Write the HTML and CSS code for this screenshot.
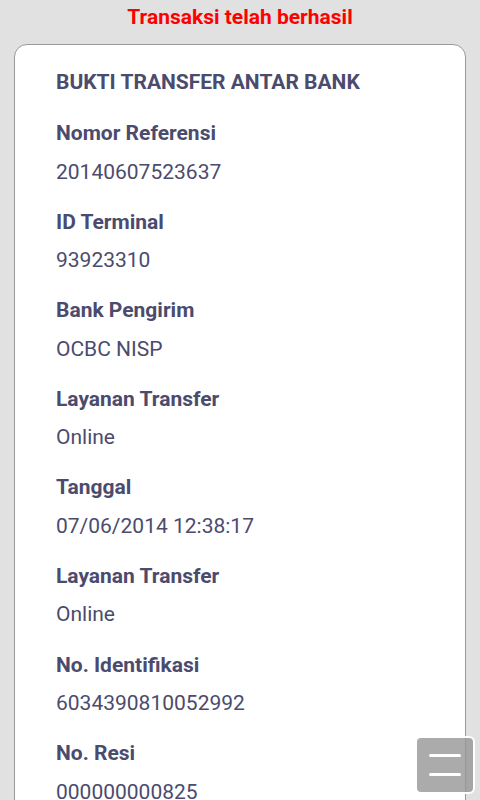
FILE: index.html
```html
<!DOCTYPE html>
<html>
<head>
<meta charset="utf-8">
<link rel="stylesheet" href="styles.css">
</head>
<body>
<div class="title">Transaksi telah berhasil</div>
<div class="card">
  <div class="heading">BUKTI TRANSFER ANTAR BANK</div>
  <div class="group"><div class="label">Nomor Referensi</div><div class="value">20140607523637</div></div>
  <div class="group"><div class="label">ID Terminal</div><div class="value">93923310</div></div>
  <div class="group"><div class="label">Bank Pengirim</div><div class="value">OCBC NISP</div></div>
  <div class="group"><div class="label">Layanan Transfer</div><div class="value">Online</div></div>
  <div class="group"><div class="label">Tanggal</div><div class="value">07/06/2014 12:38:17</div></div>
  <div class="group"><div class="label">Layanan Transfer</div><div class="value">Online</div></div>
  <div class="group"><div class="label">No. Identifikasi</div><div class="value">6034390810052992</div></div>
  <div class="group"><div class="label">No. Resi</div><div class="value">000000000825</div></div>
</div>
<div class="menu-btn"><span class="bar"></span><span class="bar"></span></div>
</body>
</html>
```
FILE: styles.css
```css
html, body {
  margin: 0;
  padding: 0;
  background: #e1e1e1;
  font-family: Roboto, "Noto Sans", sans-serif;
  overflow: hidden;
  height: 800px;
}
.title {
  color: #ff0000;
  font-weight: bold;
  font-size: 21px;
  line-height: 34px;
  text-align: center;
}
.card {
  margin: 10px 14px 0 14px;
  background: #ffffff;
  border: 1px solid #999999;
  border-radius: 13px;
  padding: 18px 20px 20px 41px;
  color: #4b4b6e;
  font-size: 21px;
}
.heading {
  font-weight: bold;
  line-height: 38.5px;
  margin-bottom: 12.5px;
}
.group {
  margin-bottom: 11.6px;
}
.label {
  font-weight: bold;
  line-height: 38.5px;
}
.value {
  line-height: 38.5px;
}
.menu-btn {
  position: fixed;
  left: 415px;
  top: 736px;
  width: 56px;
  height: 54px;
  border: 2px solid #ffffff;
  border-radius: 6px;
  background: rgba(150, 150, 150, 0.8);
  display: flex;
  flex-direction: column;
  align-items: center;
  justify-content: center;
  gap: 15.5px;
}
.bar {
  display: block;
  width: 32px;
  height: 3px;
  border-radius: 2px;
  background: #ffffff;
}
```
